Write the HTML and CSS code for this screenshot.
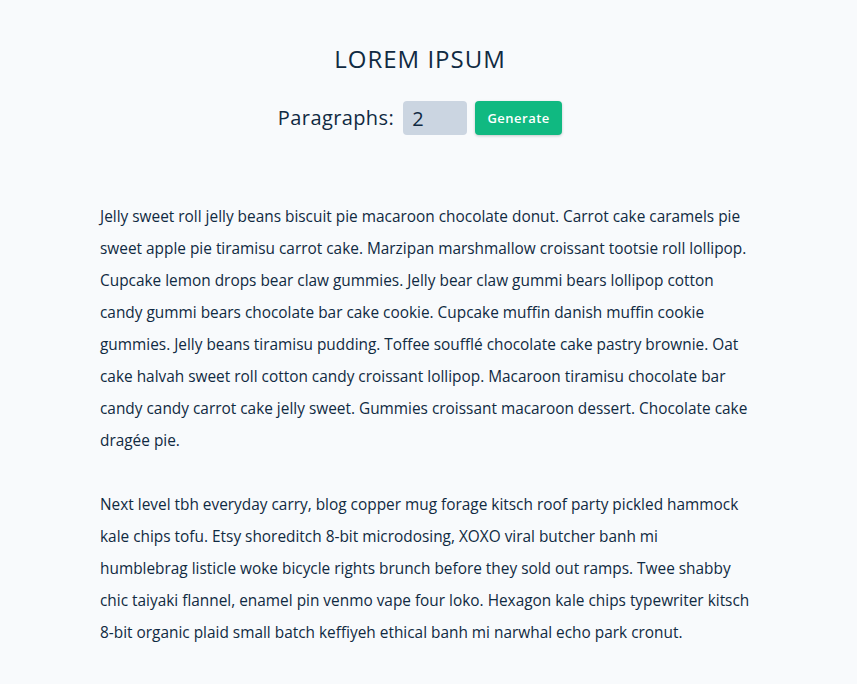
FILE: index.html
```html
<!DOCTYPE html>
<html>
<head>
<meta charset="utf-8">
<link rel="stylesheet" href="styles.css">
</head>
<body>
<section class="container">
  <h3 class="title">Lorem ipsum</h3>
  <form class="lorem-form">
    <label class="label" for="amount">Paragraphs:</label>
    <input class="amount" type="number" id="amount" value="2">
    <button class="btn" type="button">Generate</button>
  </form>
  <article class="lorem-text">
    <p>Jelly sweet roll jelly beans biscuit pie macaroon chocolate donut. Carrot cake caramels pie sweet apple pie tiramisu carrot cake. Marzipan marshmallow croissant tootsie roll lollipop. Cupcake lemon drops bear claw gummies. Jelly bear claw gummi bears lollipop cotton candy gummi bears chocolate bar cake cookie. Cupcake muffin danish muffin cookie gummies. Jelly beans tiramisu pudding. Toffee soufflé chocolate cake pastry brownie. Oat cake halvah sweet roll cotton candy croissant lollipop. Macaroon tiramisu chocolate bar candy candy carrot cake jelly sweet. Gummies croissant macaroon dessert. Chocolate cake dragée pie.</p>
    <p>Next level tbh everyday carry, blog copper mug forage kitsch roof party pickled hammock kale chips tofu. Etsy shoreditch 8-bit microdosing, XOXO viral butcher banh mi humblebrag listicle woke bicycle rights brunch before they sold out ramps. Twee shabby chic taiyaki flannel, enamel pin venmo vape four loko. Hexagon kale chips typewriter kitsch 8-bit organic plaid small batch keffiyeh ethical banh mi narwhal echo park cronut.</p>
  </article>
</section>
</body>
</html>
```
FILE: styles.css
```css
* { box-sizing: border-box; margin: 0; padding: 0; }
body {
  background: #f8fafc;
  color: #102a42;
  font-family: "Open Sans", "Noto Sans", sans-serif;
  font-size: 15.4px;
  line-height: 1.5;
}
.container {
  width: 640px;
  margin-left: 100px;
  padding-top: 41px;
}
.title {
  text-transform: uppercase;
  text-align: center;
  font-weight: 400;
  font-size: 24px;
  letter-spacing: 1px;
  line-height: 36px;
  color: #102a42;
}
.lorem-form {
  display: flex;
  justify-content: center;
  align-items: center;
  margin-top: 24px;
  gap: 8px;
}
.label {
  font-size: 20px;
  letter-spacing: 0.4px;
  color: #102a42;
  margin-right: 1px;
}
.amount {
  width: 64px;
  height: 34px;
  border: none;
  border-radius: 4px;
  background: #cbd5e1;
  padding: 0 9px;
  font-family: inherit;
  font-size: 20px;
  color: #102a42;
  -moz-appearance: textfield;
}
.amount::-webkit-inner-spin-button, .amount::-webkit-outer-spin-button { -webkit-appearance: none; }
.btn {
  width: 87px;
  height: 34px;
  border: none;
  border-radius: 4px;
  background: #10b981;
  color: #fff;
  font-family: "Open Sans", sans-serif;
  font-weight: 600;
  font-size: 13px;
  letter-spacing: 0.5px;
  box-shadow: 0 1px 3px rgba(0,0,0,0.2);
}
.lorem-text {
  margin-top: 66px;
  margin-right: -9.5px;
}
.lorem-text p {
  line-height: 32px;
  margin-bottom: 32px;
  color: #102a42;
}
```
